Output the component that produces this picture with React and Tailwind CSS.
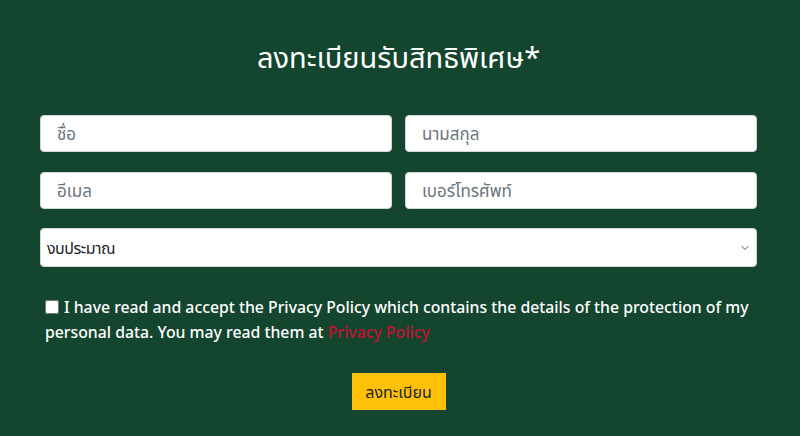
import { ChevronDown } from 'lucide-react';

const font = { fontFamily: '"Noto Sans", "Noto Sans Thai", "Open Sans", sans-serif' };

function Field({ placeholder }) {
  return (
    <input
      type="text"
      placeholder={placeholder}
      className="h-[37px] w-full rounded-[4px] border border-gray-300 bg-white px-4 text-[17px] text-[#495057] placeholder:text-[#6c757d] outline-none"
    />
  );
}

export default function App() {
  return (
    <div className="min-h-[436px] w-full bg-[#13452f] text-white" style={font}>
      <div className="pl-10 pr-[43px] pt-[35px]">
        <h2 className="text-center text-[29px] leading-[44px] font-normal">ลงทะเบียนรับสิทธิพิเศษ*</h2>

        <div className="mt-[36px] grid grid-cols-2 gap-x-[13px] gap-y-[20px]">
          <Field placeholder="ชื่อ" />
          <Field placeholder="นามสกุล" />
          <Field placeholder="อีเมล" />
          <Field placeholder="เบอร์โทรศัพท์" />
        </div>

        <div className="relative mt-[19px]">
          <div className="flex h-[39px] items-center rounded-[4px] border border-gray-300 bg-white pl-[6px] pr-3 text-[16px] tracking-[-0.5px] text-[#212529]">
            งบประมาณ
          </div>
          <ChevronDown className="absolute right-[6px] top-[14px] h-3 w-3 text-gray-600" strokeWidth={2} />
        </div>

        <div className="mt-[28px] pl-[5px] text-[15.8px] font-medium leading-[25px]">
          <input type="checkbox" className="mr-[5px] h-[14px] w-[14px] align-[-1px]" />
          I have read and accept the Privacy Policy which contains the details of the protection of my personal data. You may read them at{' '}
          <a className="text-[#c8102e]">Privacy Policy</a>
        </div>

        <div className="mt-[28px] flex justify-center">
          <button className="h-[37px] w-[94px] bg-[#ffc107] text-[16px] text-[#212529]">ลงทะเบียน</button>
        </div>
      </div>
    </div>
  );
}
